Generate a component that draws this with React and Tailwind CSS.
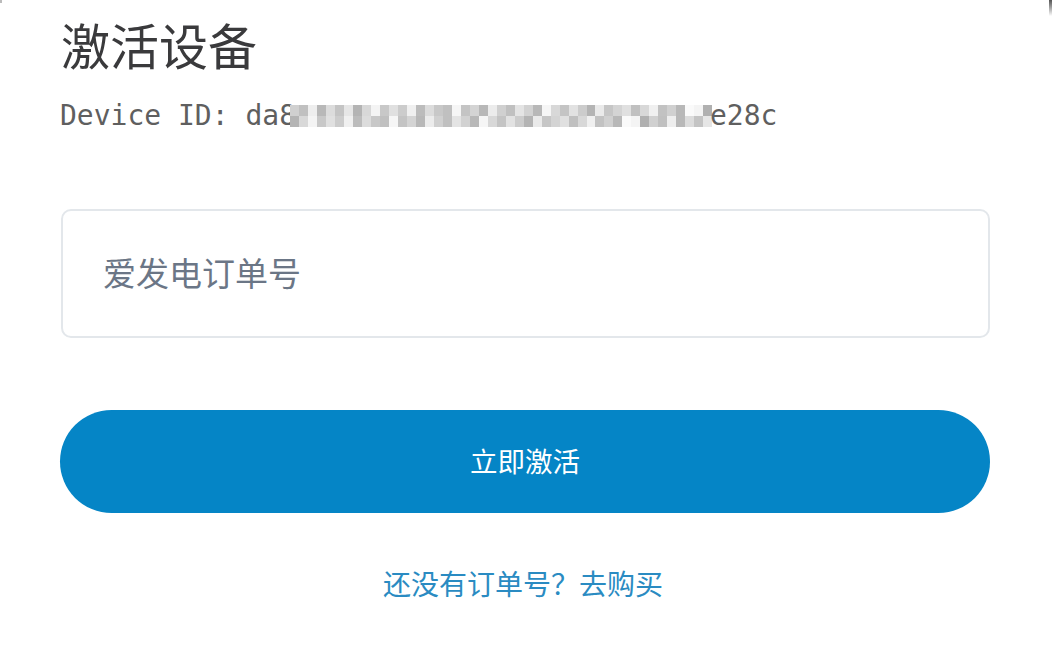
import { useState } from 'react';

const mono = { fontFamily: '"DejaVu Sans Mono", "Liberation Mono", monospace' };

// pixel mosaic that hides the middle of the device id
const mosaic = [
  'd0', 'c0', 'ee', 'b8', 'dc', 'c4', 'e6', 'b4', 'd8', 'f4', 'c8', 'e0', 'cc', 'f0', 'bc', 'dc',
  'c8', 'c0', 'f6', 'c4', 'd4', 'b8', 'ec', 'd0', 'c0', 'e4', 'd2', 'b8', 'f6', 'd8', 'c4', 'e2',
  'cc', 'b4', 'ea', 'c6', 'd4', 'e0', 'c0', 'd8', 'f0', 'c2', 'd0', 'b8', 'fa', 'f4', 'b0',
];

const shade = (c) => `#${c}${c}${c}`;

export default function App() {
  const [orderNo, setOrderNo] = useState('');

  return (
    <div
      className="relative w-[1052px] h-[660px] bg-white overflow-hidden"
      style={{ fontFamily: '"Noto Sans", "Noto Sans CJK SC", sans-serif' }}
    >
      <div className="absolute right-0 top-0 w-[3px] h-[16px] bg-gradient-to-b from-[#555] to-white" />
      <div className="absolute left-0 top-0 w-[2px] h-[3px] bg-[#bbb]" />

      <div className="flex flex-col px-[60px] pt-[14px]">
        <h1 className="text-[49px] leading-[64px] text-[#3a3a3c] pl-[1px]">激活设备</h1>

        <div className="flex items-center mt-[20px] h-[36px] text-[28px] text-[#5f5f5f]" style={mono}>
          <span className="whitespace-pre">Device ID: da8</span>
          <div className="flex h-[22px] w-[422px] ml-[-6px]">
            {mosaic.map((c, i) => (
              <div key={i} className="flex-1 flex flex-col">
                <div className="flex-1" style={{ backgroundColor: shade(c) }} />
                <div className="flex-1" style={{ backgroundColor: shade(mosaic[(i + 7) % mosaic.length]) }} />
              </div>
            ))}
          </div>
          <span className="ml-[-2px]">e28c</span>
        </div>

        <input
          value={orderNo}
          onChange={(e) => setOrderNo(e.target.value)}
          placeholder="爱发电订单号"
          className="mt-[75px] ml-[1px] w-[929px] h-[129px] rounded-[10px] border-2 border-[#e3e7eb] px-[40px] text-[33px] text-[#333] placeholder:text-[#6b7686] outline-none"
        />

        <button className="mt-[72px] w-[930px] h-[103px] rounded-full bg-[#0585c6] text-white text-[27.5px]">
          立即激活
        </button>

        <div className="mt-[51px] flex justify-center pr-[6px]">
          <a className="text-[28px] leading-[40px] text-[#2a8bc2]">还没有订单号？去购买</a>
        </div>
      </div>
    </div>
  );
}
